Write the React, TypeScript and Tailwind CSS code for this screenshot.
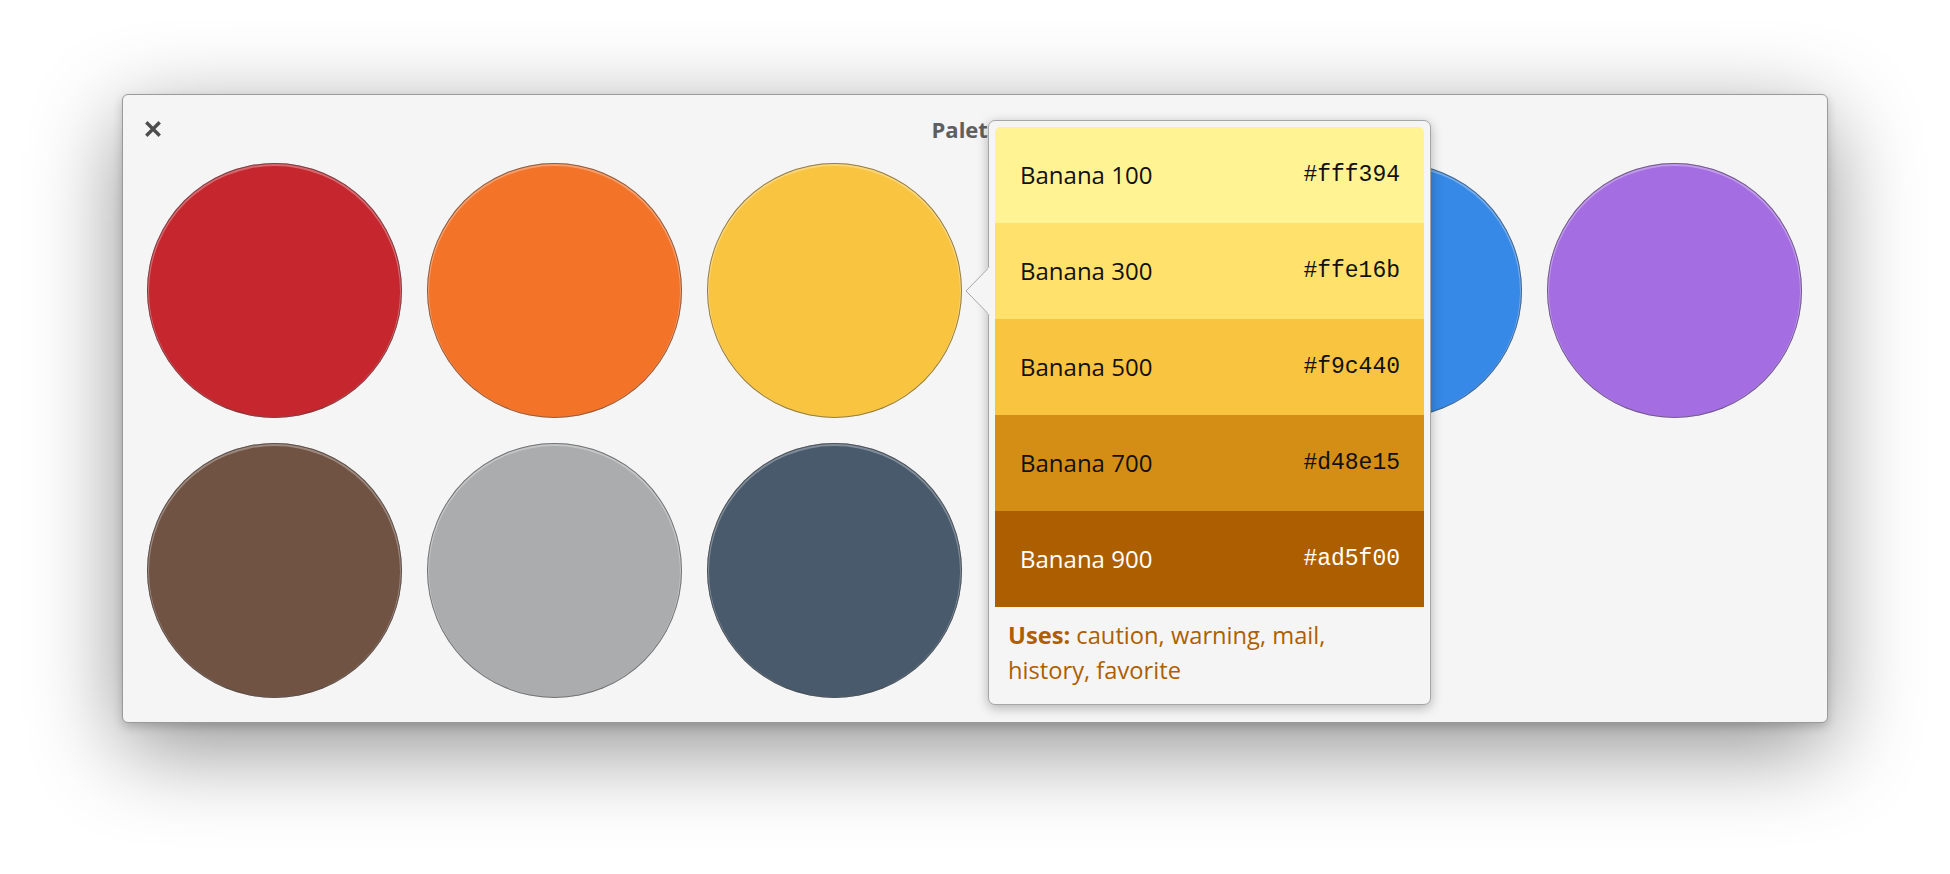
import React from "react";

const row1 = [
  "bg-[#c6262e]",
  "bg-[#f37329]",
  "bg-[#f9c440]",
  "bg-[#68b723]",
  "bg-[#3689e6]",
  "bg-[#a56de2]",
];
const row2 = ["bg-[#715344]", "bg-[#abacae]", "bg-[#485a6c]"];

const swatches = [
  { name: "Banana 100", hex: "#fff394", cls: "bg-[#fff394] text-[#111]" },
  { name: "Banana 300", hex: "#ffe16b", cls: "bg-[#ffe16b] text-[#111]" },
  { name: "Banana 500", hex: "#f9c440", cls: "bg-[#f9c440] text-[#111]" },
  { name: "Banana 700", hex: "#d48e15", cls: "bg-[#d48e15] text-[#111]" },
  { name: "Banana 900", hex: "#ad5f00", cls: "bg-[#ad5f00] text-white" },
];

function Circle({ cls }: { cls: string }) {
  return (
    <div
      className={`w-[255px] h-[255px] rounded-full shadow-[inset_0_0_0_1px_rgba(0,0,0,0.42),inset_0_1px_0_2px_rgba(255,255,255,0.3)] ${cls}`}
    />
  );
}

export default function App() {
  return (
    <div className="w-[1950px] h-[874px] bg-white overflow-hidden pt-[94px] pl-[122px] font-['Open_Sans',sans-serif]">
      <div className="relative w-[1706px] border border-[#9a9a9a] rounded-[6px] bg-[#f5f5f5] shadow-[0_25px_90px_rgba(0,0,0,0.44),0_4px_10px_rgba(0,0,0,0.18)]">
        <div className="relative h-[68px] flex items-center justify-center pr-[8px]">
          <button className="absolute left-[22px] top-[26px] w-[16px] h-[16px] flex items-center justify-center">
            <svg width="16" height="16" viewBox="0 0 16 16">
              <path d="M2.5 2.5 L13.5 13.5 M13.5 2.5 L2.5 13.5" stroke="#4d4d4d" strokeWidth="3.4" strokeLinecap="square" fill="none" />
            </svg>
          </button>
          <span className="text-[22px] font-bold text-[#5f5f5f] leading-none">Palette</span>
        </div>
        <div className="pl-[24px] pr-[25px] pb-[24px] grid grid-cols-[repeat(6,255px)] gap-[25px]">
          {row1.map((c, i) => (
            <Circle key={"a" + i} cls={c} />
          ))}
          {row2.map((c, i) => (
            <Circle key={"b" + i} cls={c} />
          ))}
          <div className="w-[255px] h-[255px]" />
        </div>

        <div className="absolute left-[865px] top-[25px] w-[443px] border border-[#a6a6a6] rounded-[7px] bg-[#f5f5f5] p-[6px] shadow-[0_3px_12px_rgba(0,0,0,0.28)]">
          <svg
            className="absolute left-[-24px] top-[146px]"
            width="26"
            height="48"
            viewBox="0 0 26 48"
          >
            <path d="M24 0 L1 24 L24 48 Z" fill="#f5f5f5" />
            <path d="M24 0.5 L1 24 L24 47.5" fill="none" stroke="#a6a6a6" strokeWidth="1" />
            <rect x="23" y="1" width="3" height="46" fill="#f5f5f5" />
          </svg>
          <div className="rounded-t-[5px] overflow-hidden">
            {swatches.map((s) => (
              <div
                key={s.name}
                className={`h-[96px] pl-[25px] pr-[24px] flex items-center justify-between ${s.cls}`}
              >
                <span className="text-[24px] leading-none">{s.name}</span>
                <span className="text-[23px] leading-none font-['Liberation_Mono',monospace]">{s.hex}</span>
              </div>
            ))}
          </div>
          <div className="px-[13px] pt-[11px] pb-[10px] text-[23.7px] leading-[35px] text-[#ad5f00]">
            <span className="font-bold">Uses:</span> caution, warning, mail, history, favorite
          </div>
        </div>
      </div>
    </div>
  );
}
